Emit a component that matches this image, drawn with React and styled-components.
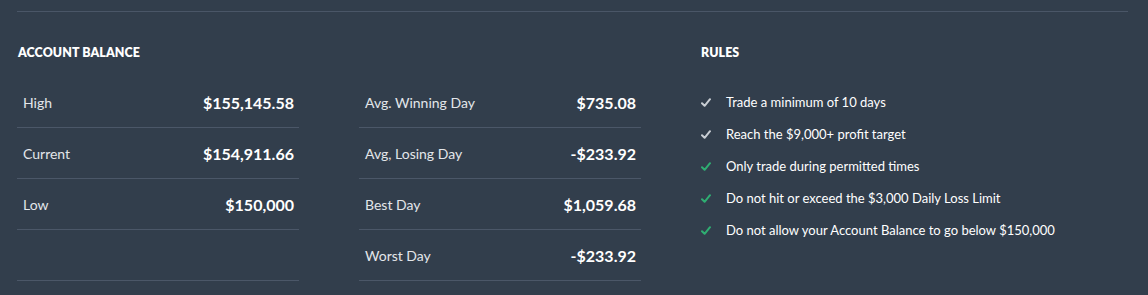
import React from "react";
import styled, { createGlobalStyle } from "styled-components";

const Global = createGlobalStyle`
  html, body { margin: 0; padding: 0; background: #323e4c; }
  body { font-family: Lato, "Open Sans", sans-serif; color: #e6e9ec; }
`;

const Page = styled.div`
  width: 1148px;
  height: 295px;
  background: #323e4c;
  padding: 11px 20px 0 17px;
  box-sizing: border-box;
  overflow: hidden;
`;

const TopRule = styled.div`
  height: 1px;
  width: 1111px;
  background: #4a5667;
`;

const Sections = styled.div`
  display: flex;
  padding-top: 34px;
`;

const Section = styled.section`
  width: ${(p) => p.$width || "auto"};
  flex: ${(p) => (p.$width ? "none" : "1")};
`;

const Heading = styled.h3`
  margin: 0 0 0 1px;
  font-size: 12.4px;
  font-weight: 800;
  color: #ffffff;
  line-height: 14px;
  letter-spacing: 0.1px;
`;

const Columns = styled.div`
  display: grid;
  grid-template-columns: 282px 282px;
  column-gap: 60px;
  margin-top: 17px;
`;

const Column = styled.div`
  display: flex;
  flex-direction: column;
`;

const Row = styled.div`
  display: flex;
  justify-content: space-between;
  align-items: center;
  height: 50px;
  padding: 0 5px 0 6px;
  border-bottom: 1px solid #4b5768;
`;

const Label = styled.span`
  font-size: 14px;
  color: #e3e6ea;
`;

const Value = styled.span`
  font-size: 16px;
  font-weight: 700;
  color: #ffffff;
`;

const RuleList = styled.ul`
  list-style: none;
  margin: 26px 0 0 0;
  padding: 0;
  display: flex;
  flex-direction: column;
`;

const RuleItem = styled.li`
  display: flex;
  align-items: center;
  height: 32px;
  font-size: 13px;
  color: #ffffff;
`;

const Check = styled.svg`
  width: 10px;
  height: 9px;
  margin: 0 15px 0 1px;
  flex: none;
  color: ${(p) => (p.$done ? "#2fae72" : "#c9ced4")};
`;

const Tick = ({ done }) => (
  <Check $done={done} viewBox="0 0 10 9">
    <path d="M1 5.2 L3.6 7.8 L9 1.2" fill="none" stroke="currentColor" strokeWidth="2" strokeLinecap="round" strokeLinejoin="round" />
  </Check>
);

const left = [
  ["High", "$155,145.58"],
  ["Current", "$154,911.66"],
  ["Low", "$150,000"],
  ["", ""],
];
const mid = [
  ["Avg. Winning Day", "$735.08"],
  ["Avg, Losing Day", "-$233.92"],
  ["Best Day", "$1,059.68"],
  ["Worst Day", "-$233.92"],
];
const rules = [
  ["Trade a minimum of 10 days", false],
  ["Reach the $9,000+ profit target", false],
  ["Only trade during permitted times", true],
  ["Do not hit or exceed the $3,000 Daily Loss Limit", true],
  ["Do not allow your Account Balance to go below $150,000", true],
];

export default function App() {
  return (
    <>
      <Global />
      <Page>
        <TopRule />
        <Sections>
          <Section $width="683px">
            <Heading>ACCOUNT BALANCE</Heading>
            <Columns>
              <Column>
                {left.map(([l, v], i) => (
                  <Row key={i}>
                    <Label>{l}</Label>
                    <Value>{v}</Value>
                  </Row>
                ))}
              </Column>
              <Column>
                {mid.map(([l, v], i) => (
                  <Row key={i}>
                    <Label>{l}</Label>
                    <Value>{v}</Value>
                  </Row>
                ))}
              </Column>
            </Columns>
          </Section>
          <Section>
            <Heading>RULES</Heading>
            <RuleList>
              {rules.map(([t, d], i) => (
                <RuleItem key={i}>
                  <Tick done={d} />
                  {t}
                </RuleItem>
              ))}
            </RuleList>
          </Section>
        </Sections>
      </Page>
    </>
  );
}
